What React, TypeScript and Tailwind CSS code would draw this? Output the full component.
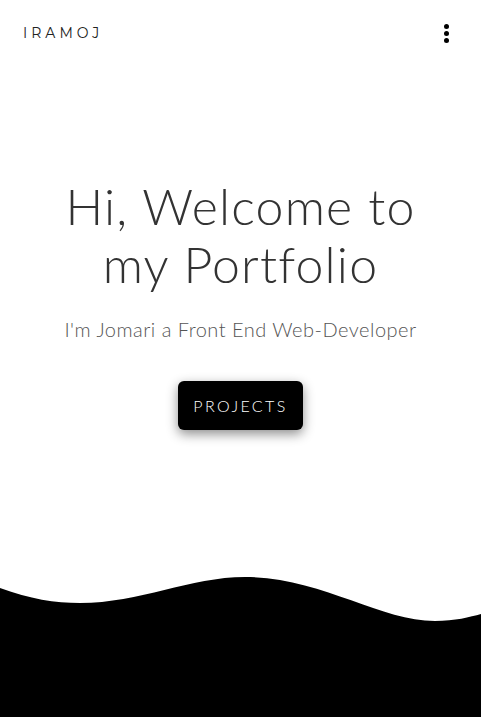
import React from "react";

const Wave = () => (
  <svg
    className="block h-[140px] w-full"
    viewBox="0 0 481 140"
    preserveAspectRatio="none"
  >
    <path
      d="M0 11 C30 22 55 26 80 26 C140 26 190 0 245 0 C320 0 380 44 435 44 C455 44 470 40 481 37 L481 140 L0 140 Z"
      fill="#000"
    />
  </svg>
);

const App = () => {
  return (
    <div className="flex h-[717px] w-full flex-col overflow-hidden bg-white">
      <header className="flex h-[66px] items-center justify-between pl-[23px] pr-[32px]">
        <span className="font-['Montserrat','Liberation_Sans',sans-serif] text-[14px] font-normal tracking-[4px] text-[#222]">
          IRAMOJ
        </span>
        <button className="flex flex-col items-center gap-[2px]">
          <span className="h-[5px] w-[5px] rounded-full bg-black"></span>
          <span className="h-[5px] w-[5px] rounded-full bg-black"></span>
          <span className="h-[5px] w-[5px] rounded-full bg-black"></span>
        </button>
      </header>

      <section className="flex flex-col items-center text-center font-['Lato','Open_Sans',sans-serif]">
        <h1 className="mt-[111px] text-[50px] font-light leading-[58px] tracking-[1.2px] text-[#333]">
          Hi, Welcome to
          <br />
          my Portfolio
        </h1>
        <p className="mt-[22px] text-[20px] font-light leading-[28px] tracking-[0.5px] text-[#555]">
          I'm Jomari a Front End Web-Developer
        </p>
        <button className="mt-[38px] h-[49px] rounded-[6px] bg-black px-[15px] text-[16px] font-light tracking-[2.4px] text-white shadow-[0_4px_12px_rgba(0,0,0,0.45)]">
          PROJECTS
        </button>
      </section>

      <div className="mt-auto">
        <Wave />
      </div>
    </div>
  );
};

export default App;
